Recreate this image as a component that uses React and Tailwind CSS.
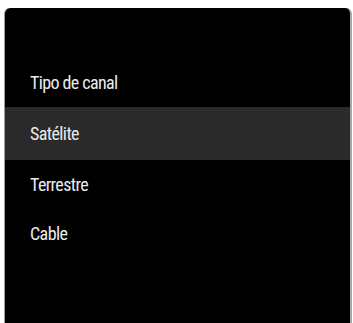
export default function App() {
  const font = { fontFamily: '"Roboto Condensed", "DejaVu Sans Condensed", sans-serif' };
  return (
    <div className="w-[353px] h-[323px] bg-white pt-[8px] pl-[4px] pr-[1px] overflow-hidden">
      <div
        className="h-[315px] bg-black rounded-t-[6px] border-l border-r-2 border-l-[#9c9c9c] border-r-[#a8a8a8] flex flex-col pt-[49px] text-[#ececec] text-[18px] tracking-[-0.6px]"
        style={font}
      >
        <div className="h-[50px] flex items-center pl-[25px]">Tipo de canal</div>
        <div className="h-[53px] flex items-center pl-[25px] bg-[#2a2a2a]">Satélite</div>
        <div className="h-[48px] flex items-center pl-[25px]">Terrestre</div>
        <div className="h-[50px] flex items-center pl-[25px]">Cable</div>
      </div>
    </div>
  );
}
